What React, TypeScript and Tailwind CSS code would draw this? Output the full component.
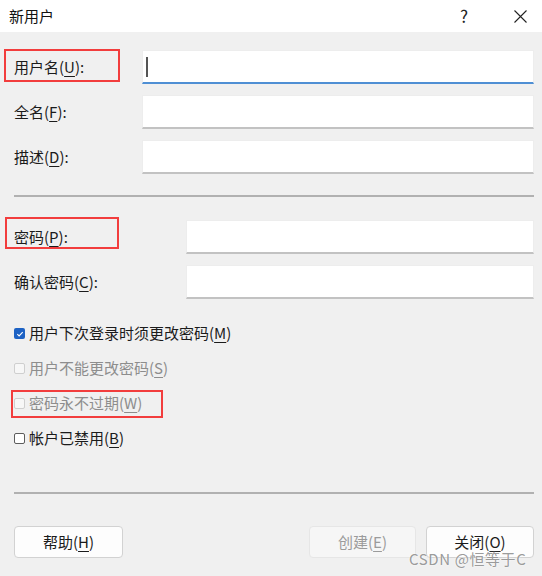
const font = { fontFamily: '"Noto Sans CJK SC", "Noto Sans", sans-serif' };

function Mn({ c }: { c: string }) {
  return <span className="underline underline-offset-[3px] decoration-1">{c}</span>;
}

function Field({
  label,
  m,
  labelW,
  focused,
  box,
}: {
  label: string;
  m: string;
  labelW: string;
  focused?: boolean;
  box?: string;
}) {
  return (
    <div className="relative flex h-[34px] items-center">
      {box && <div className={`absolute border-2 border-[#f23d3d] ${box}`} />}
      <div className={`${labelW} shrink-0 text-[15px] text-[#1b1b1b]`}>
        {label}(<Mn c={m} />):
      </div>
      <div
        className={[
          'flex h-[34px] flex-1 items-center bg-white border border-[#ededed]',
          focused ? 'border-b-2 border-b-[#4f8fd4]' : 'border-b-2 border-b-[#c2c2c2]',
        ].join(' ')}
      >
        {focused && <span className="ml-[3px] h-[20px] w-[2px] bg-[#555]" />}
      </div>
    </div>
  );
}

function Check({
  label,
  m,
  checked,
  disabled,
  box,
}: {
  label: string;
  m: string;
  checked?: boolean;
  disabled?: boolean;
  box?: string;
}) {
  return (
    <div className="relative flex h-[35px] items-center">
      {box && <div className={`absolute border-2 border-[#f23d3d] ${box}`} />}
      {checked ? (
        <span className="flex h-[11px] w-[11px] items-center justify-center rounded-[2px] bg-[#1d62c4]">
          <svg width="8" height="8" viewBox="0 0 8 8">
            <path d="M1.3 4.2 L3.1 5.9 L6.7 2.2" fill="none" stroke="white" strokeWidth="1.1" />
          </svg>
        </span>
      ) : (
        <span
          className={[
            'h-[11px] w-[11px] rounded-[2px] border',
            disabled ? 'border-[#cfcfcf] bg-[#f7f7f7]' : 'border-[#5c5c5c] bg-white',
          ].join(' ')}
        />
      )}
      <span
        className={[
          'ml-[4px] text-[15px]',
          disabled ? 'text-[#8d8d8d]' : 'text-[#1b1b1b]',
        ].join(' ')}
      >
        {label}(<Mn c={m} />)
      </span>
    </div>
  );
}

function Btn({ children, disabled, w }: { children: React.ReactNode; disabled?: boolean; w: string }) {
  return (
    <div
      className={[
        'flex h-[32px] items-center justify-center rounded-[4px] border text-[15px]',
        w,
        disabled
          ? 'border-[#e6e6e6] bg-[#f6f6f6] text-[#9b9b9b]'
          : 'border-[#d2d2d2] bg-[#fdfdfd] text-[#1b1b1b]',
      ].join(' ')}
    >
      {children}
    </div>
  );
}

export default function App() {
  return (
    <div className="flex h-[576px] w-[542px] flex-col overflow-hidden bg-[#f0f0f0]" style={font}>
      {/* title bar */}
      <div className="flex h-[32px] shrink-0 items-center bg-white">
        <span className="ml-[9px] text-[15px] text-[#111]">新用户</span>
        <span className="ml-auto mr-[46px] text-[17px] text-[#222]">?</span>
        <svg className="mr-[15px]" width="13" height="13" viewBox="0 0 13 13">
          <path d="M0.5 0.5 L12.5 12.5 M12.5 0.5 L0.5 12.5" stroke="#222" strokeWidth="1.1" />
        </svg>
      </div>

      <div className="flex flex-1 flex-col pl-[14px] pr-[8px]">
        <div className="mt-[18px] flex flex-col gap-[11px]">
          <Field label="用户名" m="U" labelW="w-[128px]" focused box="-left-[10px] -top-[1px] h-[33px] w-[116px]" />
          <Field label="全名" m="F" labelW="w-[128px]" />
          <Field label="描述" m="D" labelW="w-[128px]" />
        </div>

        <div className="mt-[21px] h-[2px] bg-[#b1b1b1]" />

        <div className="mt-[23px] flex flex-col gap-[11px]">
          <Field label="密码" m="P" labelW="w-[172px]" box="-left-[9px] -top-[3px] h-[32px] w-[114px]" />
          <Field label="确认密码" m="C" labelW="w-[172px]" />
        </div>

        <div className="mt-[17px] flex flex-col">
          <Check label="用户下次登录时须更改密码" m="M" checked />
          <Check label="用户不能更改密码" m="S" disabled />
          <Check label="密码永不过期" m="W" disabled box="-left-[3px] top-[4px] h-[28px] w-[152px]" />
          <Check label="帐户已禁用" m="B" />
        </div>

        <div className="mt-[36px] h-[2px] bg-[#b1b1b1]" />

        <div className="relative mt-[32px] flex items-center">
          <Btn w="w-[109px]">
            帮助(<Mn c="H" />)
          </Btn>
          <div className="ml-auto flex gap-[10px]">
            <Btn w="w-[107px]" disabled>
              创建(<Mn c="E" />)
            </Btn>
            <Btn w="w-[108px]">
              关闭(<Mn c="O" />)
            </Btn>
          </div>
          <span className="absolute left-[395px] top-[25px] text-[15px] leading-none tracking-[0.6px] text-[#8e8e8e]/90 [text-shadow:0_0_2px_#fff]">
            CSDN @恒等于C
          </span>
        </div>
      </div>
    </div>
  );
}
